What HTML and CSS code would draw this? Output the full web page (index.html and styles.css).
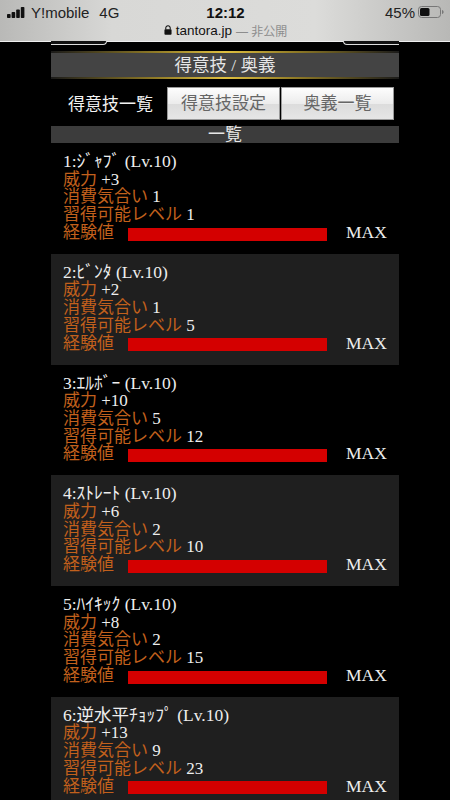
FILE: index.html
```html
<!DOCTYPE html>
<html lang="ja">
<head>
<meta charset="utf-8">
<title>得意技 / 奥義</title>
<link rel="stylesheet" href="styles.css">
</head>
<body>
<header class="status">
  <div class="status-top">
    <div class="carrier">
      <svg class="signal" width="18" height="11" viewBox="0 0 18 11"><rect x="0" y="7" width="3.600" height="4" rx=".8"/><rect x="4.600" y="5" width="3.600" height="6" rx=".8"/><rect x="9.200" y="2.500" width="3.600" height="8.500" rx=".8"/><rect x="13.800" y="0" width="3.600" height="11" rx=".8"/></svg>
      <span>Y!mobile</span><span class="net">4G</span>
    </div>
    <div class="clock">12:12</div>
    <div class="battery"><span>45%</span>
      <svg width="26" height="12" viewBox="0 0 26 12"><rect x=".5" y=".5" width="22" height="11" rx="3" fill="none" stroke="#777"/><rect x="2" y="2" width="9.5" height="8" rx="1.5" fill="#111"/><path d="M24 4v4c1-.3 1.6-1 1.6-2S25 4.300 24 4z" fill="#777"/></svg>
    </div>
  </div>
  <div class="url">
    <svg width="8" height="10" viewBox="0 0 9 11"><path d="M2 5V3.300a2.500 2.500 0 0 1 5 0V5" fill="none" stroke="#111" stroke-width="1.200"/><rect x="0.500" y="4.600" width="8" height="6.200" rx="1" fill="#111"/></svg>
    <span>tantora.jp</span><span class="private">— 非公開</span>
  </div>
</header>
<main class="page">
  <div class="peek"><span class="peek-l"></span><span class="peek-r"></span></div>
  <h1 class="title">得意技 / 奥義</h1>
  <nav class="tabs">
    <span class="tab-current">得意技一覧</span>
    <a class="tab-btn">得意技設定</a>
    <a class="tab-btn">奥義一覧</a>
  </nav>
  <h2 class="list-head">一覧</h2>
  <section class="skill">
    <div class="name">1:ｼﾞｬﾌﾞ (Lv.10)</div>
    <div><span class="k">威力</span> +3</div>
    <div><span class="k">消費気合い</span> 1</div>
    <div><span class="k">習得可能レベル</span> 1</div>
    <div class="exp"><span class="k">経験値</span><span class="bar"></span><span class="max">MAX</span></div>
  </section>
  <section class="skill alt">
    <div class="name">2:ﾋﾞﾝﾀ (Lv.10)</div>
    <div><span class="k">威力</span> +2</div>
    <div><span class="k">消費気合い</span> 1</div>
    <div><span class="k">習得可能レベル</span> 5</div>
    <div class="exp"><span class="k">経験値</span><span class="bar"></span><span class="max">MAX</span></div>
  </section>
  <section class="skill">
    <div class="name">3:ｴﾙﾎﾞｰ (Lv.10)</div>
    <div><span class="k">威力</span> +10</div>
    <div><span class="k">消費気合い</span> 5</div>
    <div><span class="k">習得可能レベル</span> 12</div>
    <div class="exp"><span class="k">経験値</span><span class="bar"></span><span class="max">MAX</span></div>
  </section>
  <section class="skill alt">
    <div class="name">4:ｽﾄﾚｰﾄ (Lv.10)</div>
    <div><span class="k">威力</span> +6</div>
    <div><span class="k">消費気合い</span> 2</div>
    <div><span class="k">習得可能レベル</span> 10</div>
    <div class="exp"><span class="k">経験値</span><span class="bar"></span><span class="max">MAX</span></div>
  </section>
  <section class="skill">
    <div class="name">5:ﾊｲｷｯｸ (Lv.10)</div>
    <div><span class="k">威力</span> +8</div>
    <div><span class="k">消費気合い</span> 2</div>
    <div><span class="k">習得可能レベル</span> 15</div>
    <div class="exp"><span class="k">経験値</span><span class="bar"></span><span class="max">MAX</span></div>
  </section>
  <section class="skill alt">
    <div class="name">6:逆水平ﾁｮｯﾌﾟ (Lv.10)</div>
    <div><span class="k">威力</span> +13</div>
    <div><span class="k">消費気合い</span> 9</div>
    <div><span class="k">習得可能レベル</span> 23</div>
    <div class="exp"><span class="k">経験値</span><span class="bar"></span><span class="max">MAX</span></div>
  </section>
</main>
</body>
</html>
```
FILE: styles.css
```css
* { box-sizing: border-box; }
html, body { margin: 0; height: 800px; overflow: hidden; background: #000; }
body { font-family: "Liberation Serif", "Noto Sans CJK JP", serif; color: #eee; font-size: 17px; }
.status {
  height: 42px;
  padding: 3px 6px 0 7px;
  background: linear-gradient(90deg, #b9b9b7 0%, #d8d8d6 25%, #dcdcda 70%, #b8b8b6 100%);
  border-bottom: 1px solid #eee;
  color: #222;
  font-family: "Liberation Sans", "Noto Sans CJK JP", sans-serif;
  font-size: 15px;
}
.status-top { display: grid; grid-template-columns: 1fr auto 1fr; align-items: center; height: 18px; }
.carrier { display: flex; align-items: center; gap: 6px; }
.carrier .signal { fill: #111; }
.net { margin-left: 4px; }
.clock { font-weight: 700; color: #111; }
.battery { display: flex; justify-content: flex-end; align-items: center; gap: 3px; }
.url { display: flex; justify-content: center; align-items: center; gap: 4px; height: 18px; color: #111; font-size: 13.500px; }
.private { color: #8d8d8d; font-size: 12px; }
.page { padding: 0 51px; width: 450px; }
.peek { display: flex; justify-content: space-between; height: 4px; margin-bottom: 6px; margin-top: -1px; }
.peek-l, .peek-r { width: 56px; height: 4px; border: 1px solid #ddd; border-top: 0; background: #111; }
.peek-l { border-left: 0; border-radius: 0 0 6px 0; }
.peek-r { border-right: 0; border-radius: 0 0 0 6px; }
.title {
  margin: 0;
  height: 28px;
  background: #444;
  color: #e6e6e6;
  font-size: 17.500px;
  font-weight: 400;
  line-height: 24px;
  text-align: center;
  border-top: 2px solid;
  border-bottom: 2px solid;
  border-image: linear-gradient(90deg, #1a1a1a 0%, #8f7a26 30%, #e0c040 50%, #8f7a26 70%, #1a1a1a 100%) 1;
}
.tabs { display: flex; align-items: stretch; height: 33px; margin-top: 8px; }
.tab-current { width: 116px; padding-left: 17px; line-height: 35px; font-size: 17px; color: #f2f2f2; white-space: nowrap; }
.tab-btn {
  width: 113px;
  margin-right: 1px;
  background: linear-gradient(#fdfdfd 0%, #ececec 50%, #dcdcdc 52%, #e6e6e6 100%);
  border: 1px solid #999;
  color: #666;
  font-size: 17px;
  line-height: 31px;
  text-align: center;
}
.list-head { margin: 6px 0 0; height: 17px; background: #3c3c3c; color: #e6e6e6; font-size: 17px; font-weight: 400; line-height: 17px; text-align: center; }
.skill { height: 110.750px; padding: 10px 12px 0; line-height: 17.700px; font-size: 17px; }
.skill.alt { background: #1f1f1f; }
.name { font-size: 17.500px; }
.k { color: #c2601c; }
.exp { display: flex; align-items: center; }
.bar { width: 199px; height: 13px; background: #d40000; margin-left: 14px; margin-top: 3px; }
.max { margin-left: 19px; font-size: 17.500px; }
```
